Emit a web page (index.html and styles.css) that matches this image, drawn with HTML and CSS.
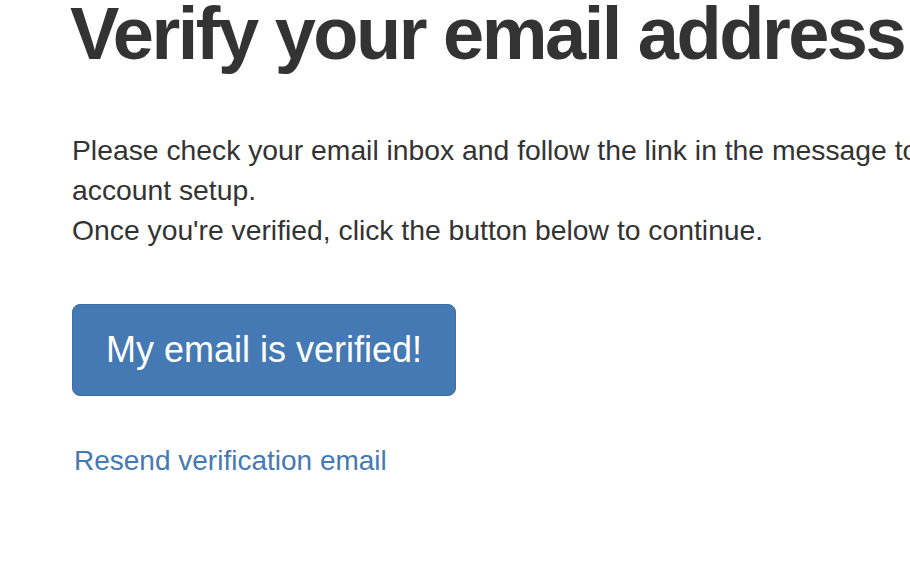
FILE: index.html
```html
<!DOCTYPE html>
<html lang="en">
<head>
<meta charset="utf-8">
<title>Verify your email address</title>
<link rel="stylesheet" href="styles.css">
</head>
<body>
<main class="page">
  <h1 class="title">Verify your email address</h1>
  <p class="lead">Please check your email inbox and follow the link in the message to complete your account setup.<br>Once you're verified, click the button below to continue.</p>
  <div class="actions">
    <button class="btn-primary" type="button">My email is verified!</button>
  </div>
  <a class="resend" href="#">Resend verification email</a>
</main>
</body>
</html>
```
FILE: styles.css
```css
html, body {
  margin: 0;
  padding: 0;
  background: #ffffff;
  overflow: hidden;
}
body {
  font-family: "Liberation Sans", Arial, Helvetica, sans-serif;
  color: #333333;
}
.page {
  width: 1100px;
  padding: 0 0 0 72px;
  display: flex;
  flex-direction: column;
  align-items: flex-start;
}
.title {
  margin: -8px 0 0 -2px;
  font-size: 74px;
  line-height: 84px;
  font-weight: bold;
  letter-spacing: -2.5px;
  white-space: nowrap;
  color: #333333;
}
.lead {
  margin: 54px 0 0 0;
  font-size: 28.3px;
  line-height: 40px;
  width: 1080px;
}
.actions {
  margin-top: 54px;
}
.btn-primary {
  box-sizing: border-box;
  width: 384px;
  height: 92px;
  border: 1px solid #3b6ca3;
  border-radius: 8px;
  background: #4479b3;
  color: #ffffff;
  font-family: "Liberation Sans", Arial, Helvetica, sans-serif;
  font-size: 36px;
  padding: 0;
}
.resend {
  margin: 48px 0 0 2px;
  font-size: 28px;
  line-height: 34px;
  color: #4579b3;
  text-decoration: none;
}
```
